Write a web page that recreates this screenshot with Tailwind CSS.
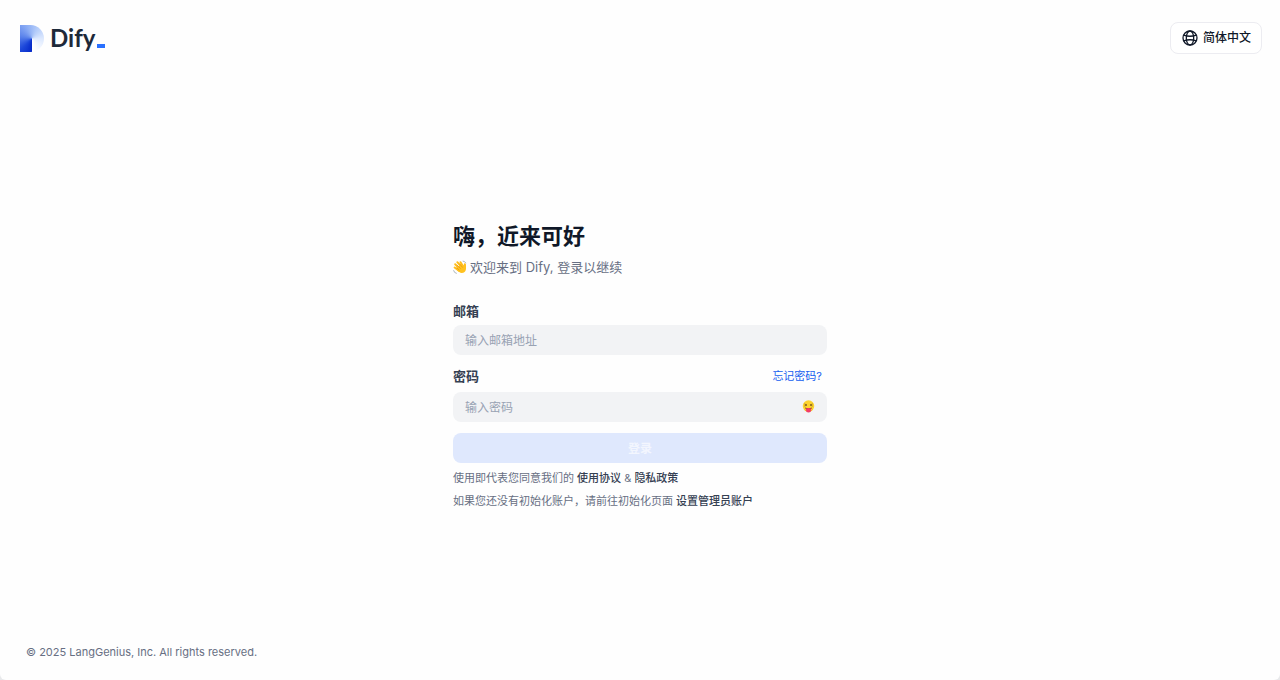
<!DOCTYPE html>
<html lang="zh-Hans">
<head>
  <meta charset="UTF-8" />
  <meta name="viewport" content="width=device-width, initial-scale=1.0" />
  <title>Dify</title>
  <script src="https://cdn.jsdelivr.net/npm/@tailwindcss/browser@4"></script>
</head>
<body class="bg-[#e8e9eb] font-['Inter','Noto_Sans_CJK_SC',sans-serif] text-[#676f83]">
  <div class="flex min-h-screen flex-col rounded-b-md bg-[#fefefe]">
    <header class="flex items-center justify-between pt-[22px] pr-[18px] pl-5">
      <a href="#" class="flex items-center gap-[6px]" aria-label="Dify">
        <span class="h-[27px] w-6 rounded-r-full bg-[conic-gradient(from_180deg_at_50%_50%,#0428c8_0deg,#1d48da_45deg,#5a82eb_100deg,#8eaff5_160deg,#b5cdfa_210deg,#dce8fe_270deg,#ffffff_350deg)]"></span>
        <span class="flex items-center gap-[2px] font-['Lato'] text-2xl leading-8 font-bold text-[#1d2939]">Dify<span class="mt-4 h-1 w-2 bg-[#2970ff]"></span></span>
      </a>
      <button type="button" class="flex h-8 items-center gap-1 rounded-lg border border-[#ececf1] bg-white px-[10px] text-xs font-medium text-[#101828]">
        <svg class="size-[18px]" viewBox="0 0 18 18" fill="none" stroke="currentColor" stroke-width="1.3">
          <circle cx="9" cy="9" r="7" />
          <ellipse cx="9" cy="9" rx="3.7" ry="7" />
          <path d="M2.7 6.1C6.5 7.5 11.5 7.5 15.3 6.1M2.7 11.9C6.5 10.5 11.5 10.5 15.3 11.9" />
        </svg>
        简体中文
      </button>
    </header>

    <main class="flex grow items-center justify-center px-6 pt-[34px]">
      <div class="w-full max-w-[374px]">
        <h1 class="text-[22px] leading-8 font-bold text-[#101828]">嗨，近来可好</h1>
        <p class="mt-[3px] flex items-center gap-[3px] text-[13px] leading-6">
          <svg class="size-[14px]" viewBox="0 0 26 26">
            <g stroke="#ffbd19" stroke-width="3.6" stroke-linecap="round">
              <path d="M4 8l8 8M8 4l8 9M14 4l5 8M3 14l8 6M22 8v8" />
            </g>
            <path d="M8 13L18 8L20 12L22 7Q25 8 24 17Q23 24 16 24Q12 24 6 17Z" fill="#ffc220" />
            <path d="M7 9l7 7M12 7l6 7M6 14l6 5" stroke="#e18b0b" stroke-width="1.2" />
            <path d="M18 2q4 0 6 4M1 19q1 5 6 6" fill="none" stroke="#9aa5b1" stroke-width="1.5" />
          </svg>
          欢迎来到 Dify, 登录以继续
        </p>
        <form class="mt-5">
          <label for="email" class="block text-[13px] leading-6 font-bold text-[#354052]">邮箱</label>
          <input id="email" type="email" placeholder="输入邮箱地址" class="mt-[2px] block h-[30px] w-full rounded-lg bg-[#f2f3f5] px-3 pt-[2px] text-xs outline-none placeholder:text-[#98a2b3]" />
          <div class="mt-[9px] flex items-center justify-between">
            <label for="password" class="text-[13px] leading-6 font-bold text-[#354052]">密码</label>
            <a href="#" class="pr-[5px] text-[11px] leading-6 text-[#155eef]">忘记密码?</a>
          </div>
          <div class="relative mt-[4px]">
            <input id="password" type="password" placeholder="输入密码" class="block h-[30px] w-full rounded-lg bg-[#f2f3f5] pt-[2px] pr-10 pl-3 text-xs outline-none placeholder:text-[#98a2b3]" />
            <button type="button" aria-label="显示密码" class="absolute inset-y-0 right-3">
              <svg class="size-[13px]" viewBox="0 0 26 26">
                <circle cx="13" cy="12" r="11.5" fill="#fdd32e" />
                <path d="M3 18Q13 26 23 18Q19 24 13 24Q7 24 3 18Z" fill="#f2a51c" />
                <path d="M5 8l5 2-5 2M21 8l-5 2 5 2" fill="none" stroke="#70501a" stroke-width="1.6" />
                <path d="M6 15Q13 17 20 15Q19 20 13 20Q7 20 6 15Z" fill="#8a4a2a" />
                <path d="M8 17Q13 15 18 17V20Q18 25 13 25Q8 25 8 20Z" fill="#f23c67" />
              </svg>
            </button>
          </div>
          <button type="submit" disabled class="mt-[11px] h-[30px] w-full rounded-lg bg-[#dfe8fd] pt-[2px] text-xs font-bold text-[#f3f6fe]">登录</button>
        </form>
        <p class="mt-1 text-[11px] leading-[23px]">使用即代表您同意我们的 <a href="#" class="font-medium text-[#354052]">使用协议</a> &amp; <a href="#" class="font-medium text-[#354052]">隐私政策</a></p>
        <p class="text-[11px] leading-[23px]">如果您还没有初始化账户，请前往初始化页面 <a href="#" class="font-medium text-[#354052]">设置管理员账户</a></p>
      </div>
    </main>

    <footer class="px-[26px] pb-5 text-[11px] leading-4">© 2025 LangGenius, Inc. All rights reserved.</footer>
  </div>
</body>
</html>
